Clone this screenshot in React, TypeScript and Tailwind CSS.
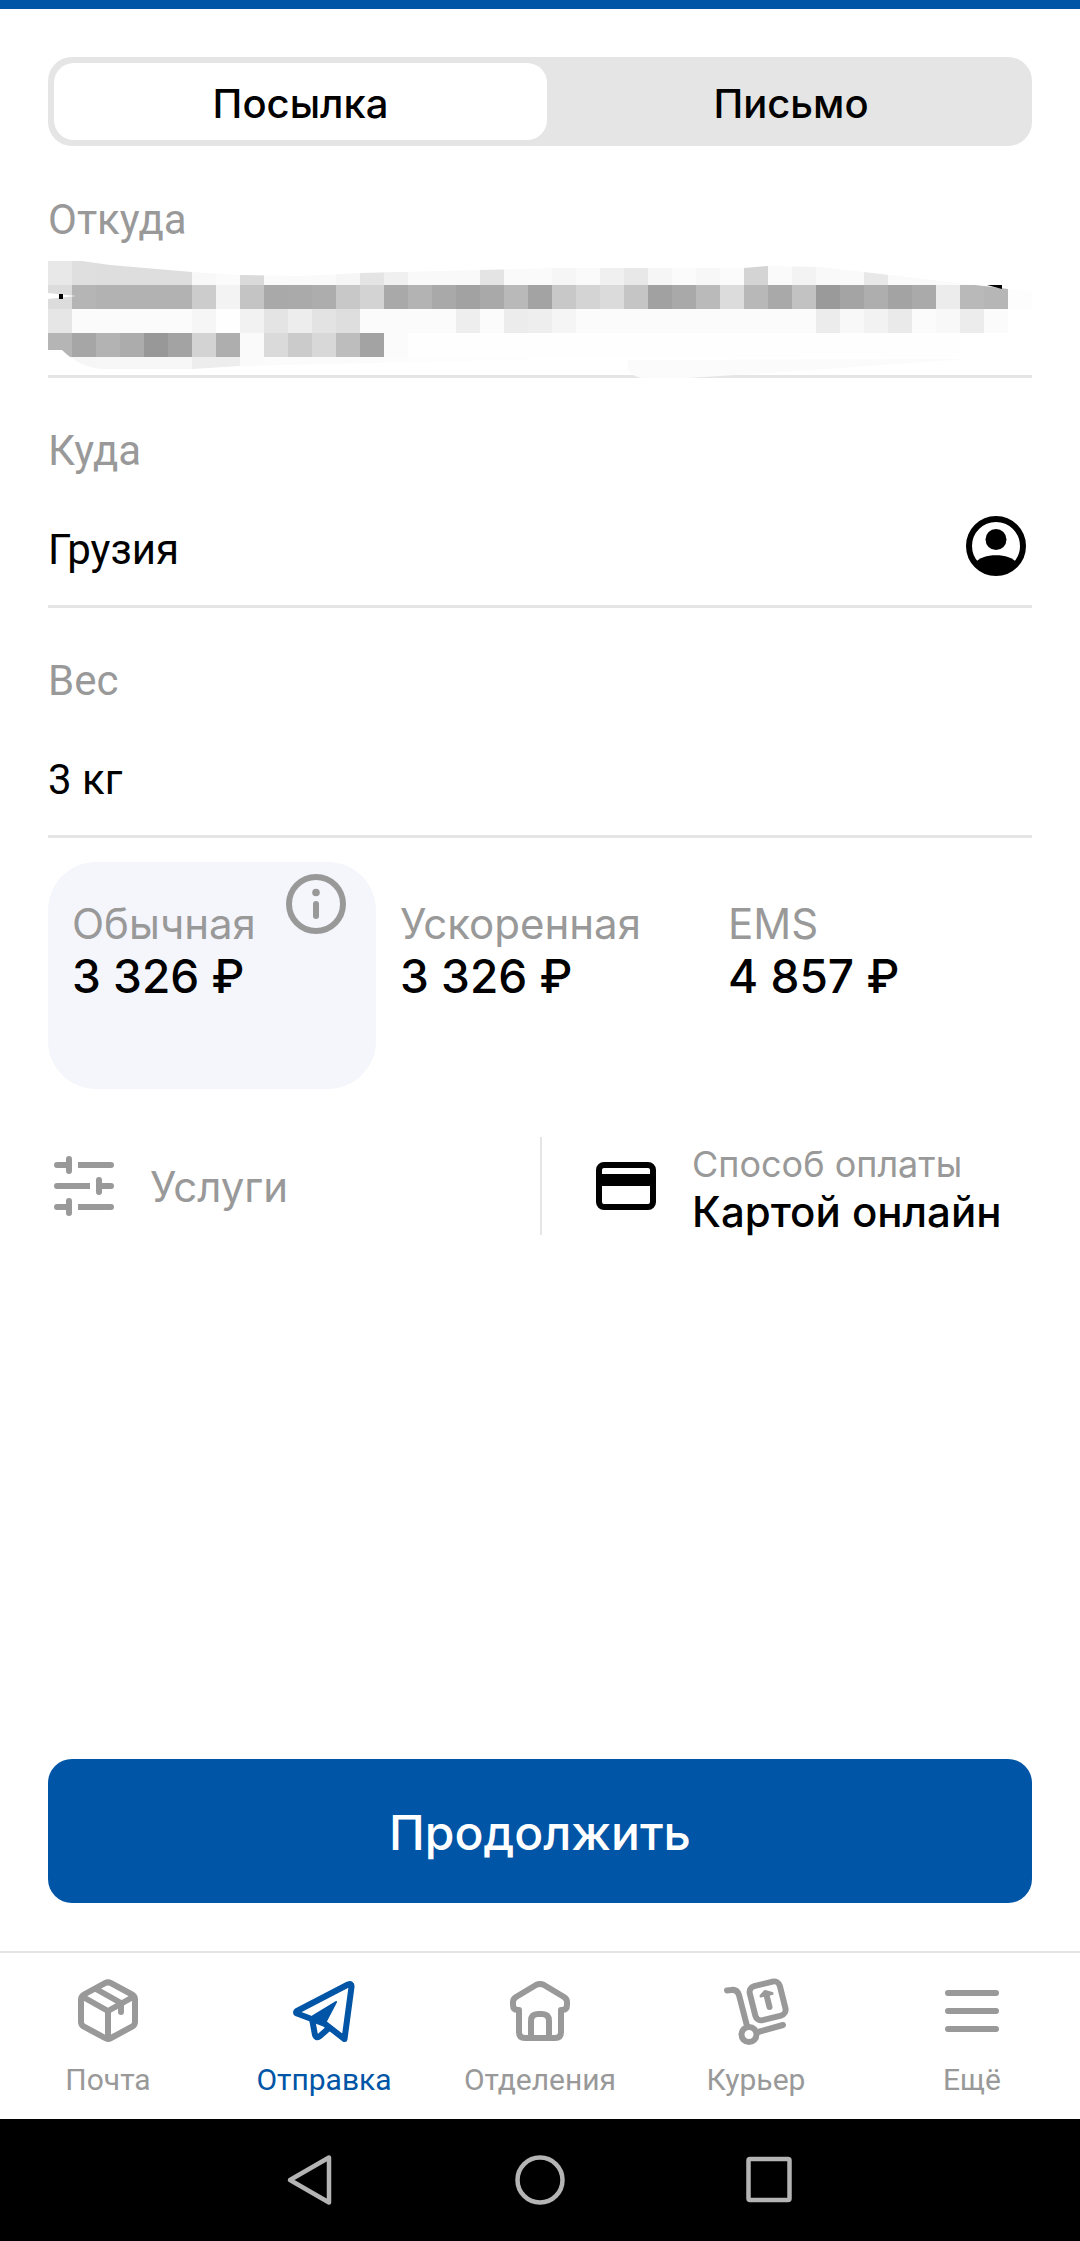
import { useState } from 'react';
import type { ReactNode } from 'react';

const PIXEL_ROWS: { y: number; shades: string }[] = [
  {
    y: 0,
    shades:
      'e8 df de de de de f8 fb da fa fa fa f6 e4 f0 f9 f9 f9 e4 fa fa f6 fa f0 e8 f6 fb f7 fb d4 fa f3 f9 fa e8 fa fa fb fb fb',
  },
  {
    y: 24,
    shades:
      'dc b5 b2 b2 b2 b2 cc f3 c4 a9 aa ad c8 d3 a9 b3 a9 a2 a9 b9 a3 c8 d4 db c5 a1 a9 ba dc b8 a9 c2 9a a4 ae a3 aa ec b9 b6 fd',
  },
  {
    y: 48,
    shades:
      'e6 fb fb fb fb fb f6 fe f2 e4 ed e3 de fb fb fb fb ee fb ec ee f5 fb fb fb fb fb fb fb fb fb fb ec f8 f2 ea fb f8 ec fb',
  },
  {
    y: 72,
    shades: 'b5 a6 b3 ac 98 a3 d3 ae fa da cb d8 bd a3 fb fe fe fe fe fe fe fe fe fe fe fe fe fe fe fe fe fe fe fe fe fe fe fe',
  },
  { y: 96, shades: 'f6 f6 f7 f7 f7 f7 ed ed fa fb fb fb fb fb fc fd fd fd fd fd' },
];

function HiddenAddress() {
  return (
    <svg viewBox="0 0 984 117" className="relative -mb-[3px] block w-full" role="img" aria-label="Адрес скрыт">
      <defs>
        <clipPath id="smudge">
          <path d="M0 0H34L62 4L144 11L192 14L252 15L312 12L432 9L512 7L696 7L719 5L772 6L816 11L892 20L936 25L984 31V100L452 99L192 105L144 108H52Q30 105 14 89H0Z" />
        </clipPath>
      </defs>
      <g clipPath="url(#smudge)" shapeRendering="crispEdges">
        {PIXEL_ROWS.map((row) =>
          row.shades
            .split(' ')
            .map((s, i) => <rect key={`${row.y}-${i}`} x={i * 24} y={row.y} width={24} height={24} fill={`#${s}${s}${s}`} />),
        )}
      </g>
      <path d="M0 32L28 35L0 38Z" fill="#fff" />
      <rect x={11} y={33} width={4} height={5} fill="#000" />
      <path d="M939 24H954V28Z" fill="#000" />
      <path d="M580 99Q576 114 594 117H640L720 112L920 98Z" fill="#fbfbfb" />
    </svg>
  );
}

function AccountIcon() {
  return (
    <svg viewBox="0 0 60 60" className="size-[60px]" aria-hidden="true">
      <circle cx="30" cy="30" r="27" fill="none" stroke="currentColor" strokeWidth="6" />
      <circle cx="30" cy="23.5" r="10.5" fill="currentColor" />
      <path d="M9 47C16 36.5 44 36.5 51 47A27 27 0 0 1 9 47Z" fill="currentColor" />
    </svg>
  );
}

function InfoIcon() {
  return (
    <svg viewBox="0 0 60 60" className="size-[60px]" fill="none" stroke="currentColor" strokeWidth="6" strokeLinecap="round" aria-hidden="true">
      <circle cx="30" cy="30" r="27" />
      <path d="M30 30V42" />
      <circle cx="30" cy="18.5" r="3.8" fill="currentColor" stroke="none" />
    </svg>
  );
}

function TuneIcon() {
  return (
    <svg viewBox="0 0 60 60" className="size-[60px]" fill="none" stroke="currentColor" strokeWidth="6" aria-hidden="true">
      <g strokeLinecap="round">
        <path d="M3 9H15M15 3V15M30 9H57M3 30H30M45 24V36M45 30H57M3 51H15M15 45V57M30 51H57" />
      </g>
      <path d="M24 9H32M28 30H36M24 51H32" />
    </svg>
  );
}

function CardIcon() {
  return (
    <svg viewBox="0 0 60 60" className="size-[60px]" aria-hidden="true">
      <rect x="3" y="9" width="54" height="42" rx="5" fill="none" stroke="currentColor" strokeWidth="6" />
      <rect x="3" y="18" width="54" height="12" fill="currentColor" />
    </svg>
  );
}

function TabIcon({ children }: { children: ReactNode }) {
  return (
    <svg
      viewBox="0 0 72 72"
      className="size-[72px]"
      fill="none"
      stroke="currentColor"
      strokeWidth="6"
      strokeLinecap="round"
      strokeLinejoin="round"
      aria-hidden="true"
    >
      {children}
    </svg>
  );
}

const TABS: { label: string; active?: boolean; icon: ReactNode }[] = [
  {
    label: 'Почта',
    icon: (
      <TabIcon>
        <path d="M33 8.2Q36 6.5 39 8.2L60 19.5Q63 21.2 63 24.5V47Q63 50 60 51.7L39 63Q36 64.7 33 63L12 51.7Q9 50 9 47V24.5Q9 21.2 12 19.5Z" />
        <path d="M11 22L36 36L61 22M36 36V63M24 14L49 28V37" />
      </TabIcon>
    ),
  },
  {
    label: 'Отправка',
    active: true,
    icon: (
      <TabIcon>
        <path d="M9 36L60 9.5Q64 8 63.5 12L56.5 64L37 49L9 38.5Q7 37.5 9 36Z" />
        <path d="M24 44L27 60Q28.5 64 32 61L41 53" />
        <path d="M48 27L25 41L37 48Z" fill="currentColor" strokeWidth="2" />
      </TabIcon>
    ),
  },
  {
    label: 'Отделения',
    icon: (
      <TabIcon>
        <path d="M15 35H14Q9 35 9 30V27Q9 24 12 22L32 10Q36 8 40 10L60 22Q63 24 63 27V30Q63 35 58 35H57V57Q57 63 51 63H21Q15 63 15 57Z" />
        <path d="M27 63V46Q27 39 34 39H38Q45 39 45 46V63" />
      </TabIcon>
    ),
  },
  {
    label: 'Курьер',
    icon: (
      <TabIcon>
        <path d="M7 15.5L11 15Q17 14 19 20L27 51" />
        <circle cx="29" cy="59.5" r="7.5" />
        <path d="M38 57L63 50" />
        <rect x="32" y="8.5" width="31" height="35" rx="6" transform="rotate(-14 47 25.5)" />
        <path d="M46.5 20L49.5 32" />
        <path d="M41 21L45 16.5L52 18.5Z" fill="currentColor" strokeWidth="3" />
      </TabIcon>
    ),
  },
  {
    label: 'Ещё',
    icon: (
      <TabIcon>
        <path d="M12 18H60M12 36H60M12 54H60" />
      </TabIcon>
    ),
  },
];

const KINDS = [
  { name: 'Посылка', active: '-mr-[7px] bg-white', idle: 'pr-4' },
  { name: 'Письмо', active: '-ml-[7px] bg-white', idle: 'pl-4' },
];

const TARIFFS = [
  { id: 'regular', name: 'Обычная', price: '3 326 ₽' },
  { id: 'fast', name: 'Ускоренная', price: '3 326 ₽' },
  { id: 'ems', name: 'EMS', price: '4 857 ₽' },
];

function Field({ id, label, value, action }: { id: string; label: string; value: string; action?: ReactNode }) {
  return (
    <div className="border-b-[3px] border-[#e5e5e5] pt-[45px] pb-[30px] font-['Roboto',sans-serif] text-[42px] leading-[56px]">
      <label htmlFor={id} className="block text-[#999999]">
        {label}
      </label>
      <div className="mt-[38px] flex h-[58px] items-center">
        <input id={id} defaultValue={value} className="h-[58px] min-w-0 flex-1 bg-transparent pt-[6px] text-black outline-none" />
        {action}
      </div>
    </div>
  );
}

export default function App() {
  const [kind, setKind] = useState('Посылка');
  const [tariff, setTariff] = useState('regular');

  return (
    <div className="flex min-h-screen flex-col bg-white font-['Inter',sans-serif] text-black">
      <div className="h-[9px] bg-[#0055a6]" />

      <main className="flex flex-1 flex-col px-12 pt-12 pb-12">
        <div className="grid grid-cols-2 rounded-3xl bg-[#e5e5e5] p-[6px]">
          {KINDS.map((k) => (
            <button
              key={k.name}
              type="button"
              aria-pressed={kind === k.name}
              onClick={() => setKind(k.name)}
              className={`h-[77px] rounded-[20px] pt-1 text-[40px] leading-[56px] font-medium ${kind === k.name ? k.active : k.idle}`}
            >
              {k.name}
            </button>
          ))}
        </div>

        <div className="border-b-[3px] border-[#e5e5e5] pt-[46px]">
          <p className="mb-[13px] font-['Roboto',sans-serif] text-[42px] leading-[56px] text-[#999999]">Откуда</p>
          <HiddenAddress />
        </div>

        <Field
          id="destination"
          label="Куда"
          value="Грузия"
          action={
            <button type="button" aria-label="Выбрать получателя" className="mr-[6px] shrink-0">
              <AccountIcon />
            </button>
          }
        />
        <Field id="weight" label="Вес" value="3 кг" />

        <div className="mt-6 grid grid-cols-3">
          {TARIFFS.map((t) => (
            <div key={t.id} className={`relative h-[227px] rounded-[48px] ${tariff === t.id ? 'bg-[#f5f6fc]' : ''}`}>
              <label className="block h-full cursor-pointer px-6 pt-9">
                <input
                  type="radio"
                  name="tariff"
                  value={t.id}
                  checked={tariff === t.id}
                  onChange={() => setTariff(t.id)}
                  className="sr-only"
                />
                <span className="block text-[42px] leading-[52px] text-[#999999]">{t.name}</span>
                <span className="block text-[46px] leading-[52px] font-medium">{t.price}</span>
              </label>
              {tariff === t.id && (
                <button type="button" aria-label="Подробнее о тарифе" className="absolute top-3 right-[30px] text-[#999999]">
                  <InfoIcon />
                </button>
              )}
            </div>
          ))}
        </div>

        <div className="mt-12 mb-12 grid grid-cols-2">
          <button type="button" className="flex h-[98px] items-center gap-9 pl-[6px] text-[42px] text-[#999999]">
            <TuneIcon />
            Услуги
          </button>
          <button type="button" className="flex items-center gap-9 border-l-2 border-[#e5e5e5] pl-[54px] text-left">
            <CardIcon />
            <span className="pt-1 leading-[47px] whitespace-nowrap">
              <span className="block text-[36px] text-[#999999]">Способ оплаты</span>
              <span className="block text-[42px] font-medium">Картой онлайн</span>
            </span>
          </button>
        </div>

        <button type="button" className="mt-auto h-36 rounded-3xl bg-[#0055a6] pt-[3px] text-[48px] font-medium text-white">
          Продолжить
        </button>
      </main>

      <nav className="grid grid-cols-5 border-t-2 border-[#e5e5e5] pt-[22px] pb-[19px] font-['Roboto',sans-serif]">
        {TABS.map((t) => (
          <a
            key={t.label}
            href="#"
            aria-current={t.active ? 'page' : undefined}
            className={`flex flex-col items-center gap-[13px] text-[30px] leading-10 ${t.active ? 'text-[#0055a6]' : 'text-[#999999]'}`}
          >
            {t.icon}
            {t.label}
          </a>
        ))}
      </nav>

      <div className="flex h-[122px] items-center justify-center gap-[170px] bg-black text-[#b4b4b4]">
        <button type="button" aria-label="Назад">
          <svg viewBox="0 0 60 60" className="size-[60px]" fill="none" stroke="currentColor" strokeWidth="4.5" strokeLinejoin="round">
            <path d="M10 30L49 7.5V52.5Z" />
          </svg>
        </button>
        <button type="button" aria-label="Домой">
          <svg viewBox="0 0 60 60" className="size-[60px]" fill="none" stroke="currentColor" strokeWidth="4.5">
            <circle cx="30" cy="30" r="22.5" />
          </svg>
        </button>
        <button type="button" aria-label="Недавние">
          <svg viewBox="0 0 60 60" className="size-[60px]" fill="none" stroke="currentColor" strokeWidth="4.5">
            <rect x="8.500" y="9" width="41" height="41" rx="1.500" />
          </svg>
        </button>
      </div>
    </div>
  );
}
